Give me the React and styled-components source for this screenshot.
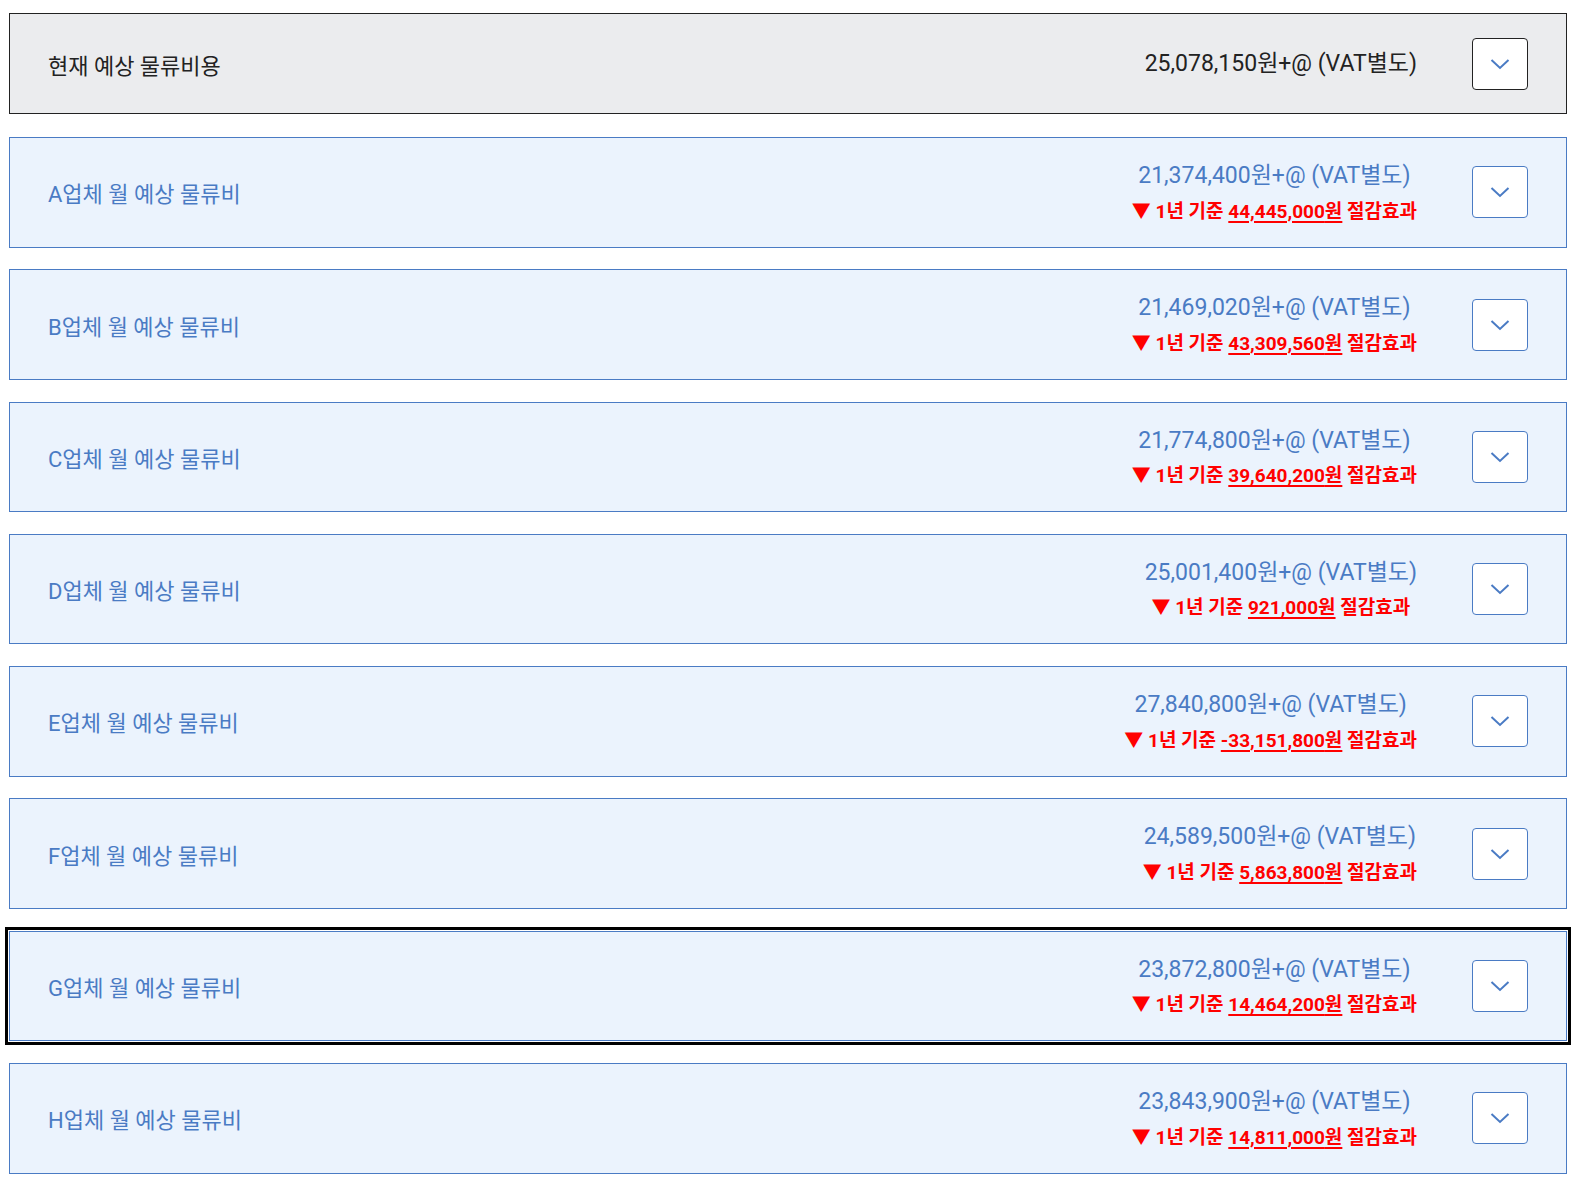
import React from 'react'
import styled, { createGlobalStyle, css } from 'styled-components'

const GlobalStyle = createGlobalStyle`
  html, body {
    margin: 0;
    padding: 0;
    background: #ffffff;
    height: 100%;
    overflow: hidden;
  }
  body {
    font-family: Roboto, "Noto Sans CJK KR", "Noto Sans", sans-serif;
  }
  *, *::before, *::after {
    box-sizing: border-box;
  }
`

const colors = {
  blue: '#4a7bc4',
  blueBg: '#ebf3fd',
  greyBg: '#ebecee',
  dark: '#222222',
  red: '#ff0000',
}

const vendors = [
  { name: 'A', cost: '21,374,400', saving: '44,445,000' },
  { name: 'B', cost: '21,469,020', saving: '43,309,560' },
  { name: 'C', cost: '21,774,800', saving: '39,640,200' },
  { name: 'D', cost: '25,001,400', saving: '921,000' },
  { name: 'E', cost: '27,840,800', saving: '-33,151,800' },
  { name: 'F', cost: '24,589,500', saving: '5,863,800' },
  { name: 'G', cost: '23,872,800', saving: '14,464,200', focused: true },
  { name: 'H', cost: '23,843,900', saving: '14,811,000' },
]

const Chevron = ({ color }) => (
  <svg width="20" height="12" viewBox="0 0 20 12" fill="none">
    <path d="M1.5 2 L10 10 L18.5 2" stroke={color} strokeWidth="2" />
  </svg>
)

const App = () => (
  <>
    <GlobalStyle />
    <Page>
      <TotalCard>
        <Label $current>현재 예상 물류비용</Label>
        <Right>
          <Amounts>
            <Cost $current>25,078,150원+@ (VAT별도)</Cost>
          </Amounts>
          <ToggleButton $current aria-label="펼치기">
            <Chevron color={colors.blue} />
          </ToggleButton>
        </Right>
      </TotalCard>
      <List>
        {vendors.map((v) => (
          <VendorCard key={v.name} $focused={v.focused}>
            <Label>{v.name}업체 월 예상 물류비</Label>
            <Right>
              <Amounts>
                <Cost>{v.cost}원+@ (VAT별도)</Cost>
                <Saving>
                  ▼ 1년 기준 <u>{v.saving}원</u> 절감효과
                </Saving>
              </Amounts>
              <ToggleButton aria-label="펼치기">
                <Chevron color={colors.blue} />
              </ToggleButton>
            </Right>
          </VendorCard>
        ))}
      </List>
    </Page>
  </>
)

export default App

// ------- STYLES -------

const Page = styled.div`
  width: 1567px;
  padding: 13px 0 0 9px;
`

const cardBase = css`
  display: flex;
  align-items: center;
  justify-content: space-between;
  padding: 0 38px;
  width: 100%;
`

const TotalCard = styled.div`
  ${cardBase}
  height: 101px;
  background: ${colors.greyBg};
  border: 1px solid ${colors.dark};
  margin-bottom: 23px;
`

const List = styled.div`
  display: flex;
  flex-direction: column;
  gap: 21.8px;
`

const VendorCard = styled.div`
  ${cardBase}
  height: 110.5px;
  background: ${colors.blueBg};
  border: 1px solid ${colors.blue};
  ${(p) =>
    p.$focused &&
    css`
      box-shadow: 0 0 0 1px #ffffff, 0 0 0 4px #000000;
    `}
`

const Label = styled.div`
  font-size: 22px;
  color: ${(p) => (p.$current ? colors.dark : colors.blue)};
`

const Right = styled.div`
  display: flex;
  align-items: center;
  gap: 55px;
`

const Amounts = styled.div`
  display: flex;
  flex-direction: column;
  align-items: center;
  text-align: center;
  gap: 8.5px;
`

const Cost = styled.div`
  font-size: 23px;
  line-height: 30px;
  color: ${(p) => (p.$current ? colors.dark : colors.blue)};
`

const Saving = styled.div`
  font-size: 19px;
  line-height: 24px;
  font-weight: 700;
  color: ${colors.red};

  u {
    text-decoration-thickness: 2px;
    text-underline-offset: 3px;
  }
`

const ToggleButton = styled.button`
  width: 56px;
  height: 52px;
  display: flex;
  align-items: center;
  justify-content: center;
  background: #ffffff;
  border: 1px solid ${(p) => (p.$current ? colors.dark : colors.blue)};
  border-radius: 4px;
  padding: 0;
  cursor: pointer;
`
